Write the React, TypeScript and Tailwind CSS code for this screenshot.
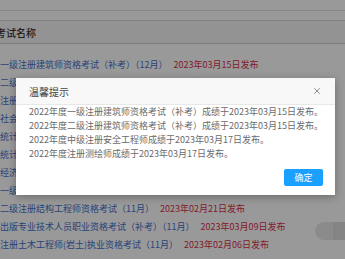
import React from "react";
import { X } from "lucide-react";

type Row = { name: string; date: string };

const rows: Row[] = [
  { name: "一级注册建筑师资格考试（补考）（12月）", date: "2023年03月15日发布" },
  { name: "二级注册建筑师资格考试（补考）（12月）", date: "2023年03月15日发布" },
  { name: "注册安全工程师职业资格考试（补考）", date: "2023年03月17日发布" },
  { name: "社会工作者职业资格考试（补考）", date: "2023年03月10日发布" },
  { name: "统计专业技术资格考试", date: "2023年03月01日发布" },
  { name: "统计专业技术资格考试（补考）", date: "2023年03月01日发布" },
  { name: "经济专业技术资格考试（补考）", date: "2023年02月28日发布" },
  { name: "一级注册结构工程师资格考试（11月）", date: "2023年02月21日发布" },
  { name: "二级注册结构工程师资格考试（11月）", date: "2023年02月21日发布" },
  { name: "出版专业技术人员职业资格考试（补考）（11月）", date: "2023年03月09日发布" },
  { name: "注册土木工程师(岩土)执业资格考试（11月）", date: "2023年02月06日发布" },
];

const notices = [
  "2022年度一级注册建筑师资格考试（补考）成绩于2023年03月15日发布。",
  "2022年度二级注册建筑师资格考试（补考）成绩于2023年03月15日发布。",
  "2022年度中级注册安全工程师成绩于2023年03月17日发布。",
  "2022年度注册测绘师成绩于2023年03月17日发布。",
];

const font = { fontFamily: '"Noto Sans CJK SC", "Noto Sans", sans-serif' };

export default function App() {
  return (
    <div className="relative w-[345px] h-[259px] overflow-hidden bg-white" style={font}>
      {/* page behind the mask */}
      <div className="flex flex-col">
        <div className="h-[11px] border-b border-[#e0e0e0]" />
        <div className="h-[10px] border-b border-[#d8d8d8]" />
        <div className="h-[23px] flex items-center bg-[#f5f5f5] border-b border-[#d0d0d0]">
          <span className="-ml-[4px] text-[10px] font-medium text-[#333]">考试名称</span>
        </div>
        <div className="flex flex-col pt-[12px]">
          {rows.map((r) => (
            <div key={r.name} className="h-[18px] flex items-center whitespace-nowrap text-[9px]">
              <span className="text-[#4470cc]">{r.name}</span>
              <span className="ml-[6px] text-[#d8304a]">{r.date}</span>
            </div>
          ))}
        </div>
      </div>

      <div className="absolute right-0 top-[222px] w-[30px] h-[18px] rounded-l-full bg-[#e8e8e8] flex justify-end">
        <div className="w-[12px] h-full bg-[#dcdcdc]" />
      </div>

      {/* mask */}
      <div className="absolute inset-0 bg-black/40" />

      {/* dialog */}
      <div className="absolute left-[16px] top-[78px] w-[319px] bg-white shadow-[0_2px_8px_rgba(0,0,0,0.3)]">
        <div className="h-[27px] flex items-center justify-between px-[13px] bg-[#f8f8f8] border-b border-[#e8e8e8]">
          <span className="text-[10px] text-[#444]">温馨提示</span>
          <X size={10} strokeWidth={1.4} className="text-[#444]" />
        </div>
        <div className="px-[13px] text-[9px] leading-[14px] text-[#6a6a6a]">
          {notices.map((n) => (
            <p key={n} className="whitespace-nowrap">{n}</p>
          ))}
        </div>
        <div className="flex justify-end pr-[12px] pt-[8px] pb-[9px]">
          <button className="w-[39px] h-[17px] rounded-[2px] bg-[#1aa0ff] text-white text-[9px] leading-none">
            确定
          </button>
        </div>
      </div>
    </div>
  );
}
